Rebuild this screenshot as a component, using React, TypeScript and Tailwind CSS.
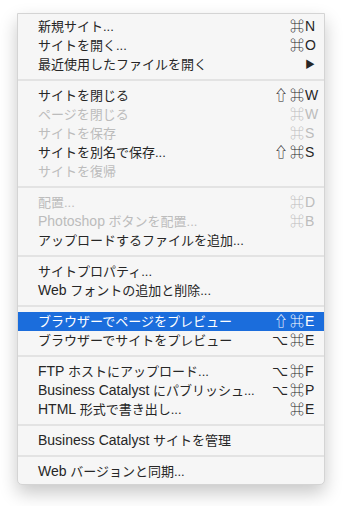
import React from "react";

type Item =
  | { sep: true }
  | {
      sep?: false;
      label: string;
      mods?: string;
      key?: string;
      disabled?: boolean;
      active?: boolean;
      submenu?: boolean;
    };

const items: Item[] = [
  { label: "新規サイト...", mods: "⌘", key: "N" },
  { label: "サイトを開く...", mods: "⌘", key: "O" },
  { label: "最近使用したファイルを開く", submenu: true },
  { sep: true },
  { label: "サイトを閉じる", mods: "⇧⌘", key: "W" },
  { label: "ページを閉じる", mods: "⌘", key: "W", disabled: true },
  { label: "サイトを保存", mods: "⌘", key: "S", disabled: true },
  { label: "サイトを別名で保存...", mods: "⇧⌘", key: "S" },
  { label: "サイトを復帰", disabled: true },
  { sep: true },
  { label: "配置...", mods: "⌘", key: "D", disabled: true },
  { label: "Photoshop ボタンを配置...", mods: "⌘", key: "B", disabled: true },
  { label: "アップロードするファイルを追加..." },
  { sep: true },
  { label: "サイトプロパティ..." },
  { label: "Web フォントの追加と削除..." },
  { sep: true },
  { label: "ブラウザーでページをプレビュー", mods: "⇧⌘", key: "E", active: true },
  { label: "ブラウザーでサイトをプレビュー", mods: "⌥⌘", key: "E" },
  { sep: true },
  { label: "FTP ホストにアップロード...", mods: "⌥⌘", key: "F" },
  { label: "Business Catalyst にパブリッシュ...", mods: "⌥⌘", key: "P" },
  { label: "HTML 形式で書き出し...", mods: "⌘", key: "E" },
  { sep: true },
  { label: "Business Catalyst サイトを管理" },
  { sep: true },
  { label: "Web バージョンと同期..." },
];

// latin runs are a touch wider in the original system font
function Label({ text }: { text: string }) {
  const parts = text.split(/([A-Za-z]+(?: [A-Za-z]+)*)/);
  return (
    <span className="flex-1 whitespace-nowrap">
      {parts.map((p, i) =>
        /^[A-Za-z]/.test(p) ? (
          <span key={i} className="text-[14px]">
            {p}
          </span>
        ) : (
          <span key={i}>{p}</span>
        )
      )}
    </span>
  );
}

export default function App() {
  return (
    <div className="w-[343px] h-[506px] bg-white pt-[13px] pl-[17px]">
      <div
        className="w-[308px] bg-[#f6f6f6] border border-[#d4d4d4] rounded-b-[5px] py-[3px] shadow-[0_8px_18px_rgba(0,0,0,0.22)] text-[13px] leading-[19px]"
        style={{ fontFamily: '"Liberation Sans", "Noto Sans CJK JP", sans-serif' }}
      >
        {items.map((it, i) =>
          it.sep ? (
            <div key={i} className="h-[12px] flex items-center">
              <div className="w-full h-[2px] bg-[#e3e3e3]" />
            </div>
          ) : (
            <div
              key={i}
              className={`h-[19px] flex items-center pl-[20px] pr-[1px] ${
                it.active
                  ? "bg-[#1b6ddc] text-white"
                  : it.disabled
                  ? "text-[#bcbcbc]"
                  : "text-[#262626]"
              }`}
            >
              <Label text={it.label} />
              {it.submenu ? (
                <span className="w-[19px] text-[10px] pl-[1px]">▶</span>
              ) : it.key ? (
                <span className="flex items-center">
                  {it.mods!.split("").map((m, j) => (
                    <span key={j} className="text-[14px] ml-[2px]">
                      {m}
                    </span>
                  ))}
                  <span className="w-[19px] text-[14px] pl-[1px]">{it.key}</span>
                </span>
              ) : null}
            </div>
          )
        )}
      </div>
    </div>
  );
}
